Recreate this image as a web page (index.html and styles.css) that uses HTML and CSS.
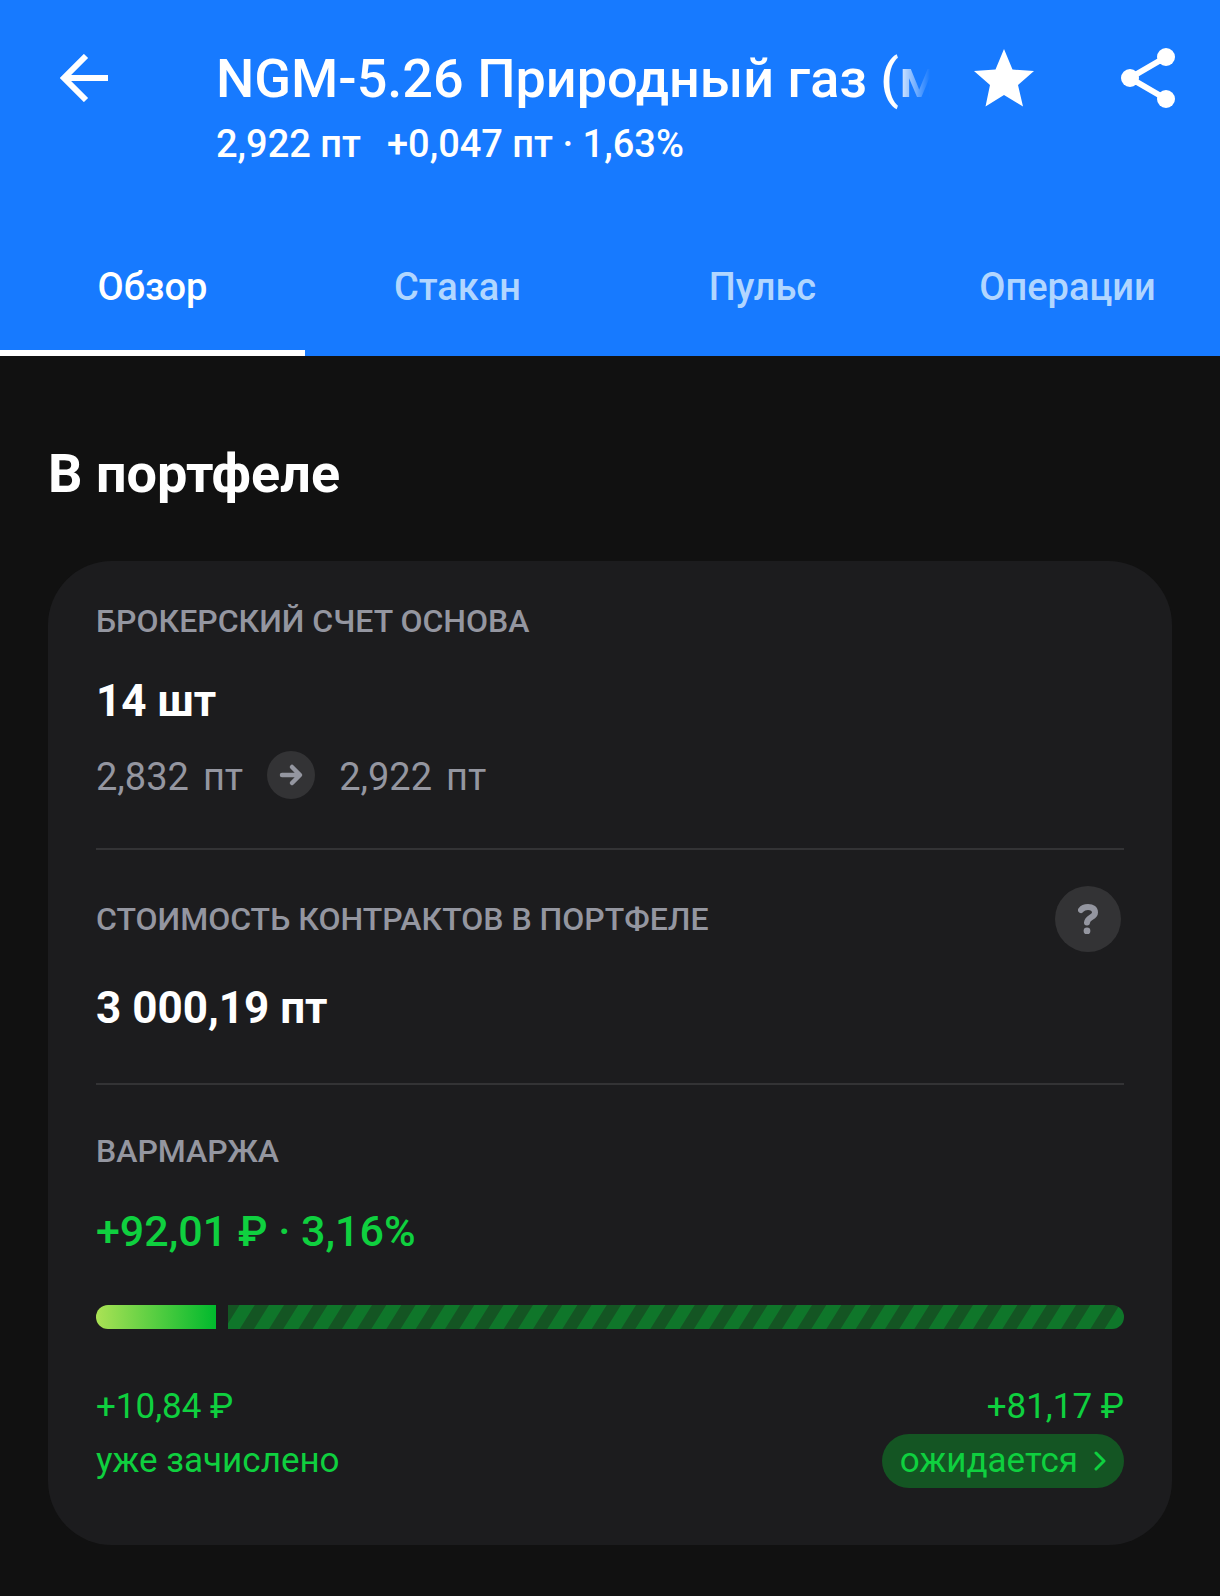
FILE: index.html
```html
<!DOCTYPE html>
<html lang="ru">
<head>
    <meta charset="UTF-8">
    <meta name="viewport" content="width=device-width, initial-scale=1.0">
    <title>NGM-5.26 Природный газ</title>
    <link rel="stylesheet" href="styles.css">
</head>
<body>
    <header class="header">
        <div class="toolbar">
            <button class="icon-button back" aria-label="Назад">
                <svg width="48" height="48" viewBox="0 0 48 48" fill="none" stroke="#fff" stroke-width="6">
                    <path d="M48 24H5M26 2L4 24l22 22"/>
                </svg>
            </button>
            <div class="instrument">
                <h1>NGM-5.26 Природный газ (мини)</h1>
                <p class="quote"><span>2,922 пт</span><span>+0,047 пт · 1,63%</span></p>
            </div>
            <button class="icon-button" aria-label="В избранное">
                <svg width="60" height="58" viewBox="0 0 60 58" fill="#fff">
                    <path d="M30 0l8.500 20.500L60 22 44 36l5 21.500L30 46 11.500 57.500 16 36 0 22l21.500-1.500z"/>
                </svg>
            </button>
            <button class="icon-button share" aria-label="Поделиться">
                <svg width="54" height="60" viewBox="0 0 54 60" fill="#fff">
                    <path d="M45 9L9 30l36 21" fill="none" stroke="#fff" stroke-width="6"/>
                    <circle cx="45" cy="9" r="9"/>
                    <circle cx="9" cy="30" r="9"/>
                    <circle cx="45" cy="51" r="9"/>
                </svg>
            </button>
        </div>
        <nav class="tabs">
            <a class="tab active" href="#overview">Обзор</a>
            <a class="tab" href="#book">Стакан</a>
            <a class="tab" href="#pulse">Пульс</a>
            <a class="tab" href="#operations">Операции</a>
        </nav>
    </header>

    <main class="content" id="overview">
        <h2>В портфеле</h2>
        <div class="card">
            <section class="block">
                <h3>БРОКЕРСКИЙ СЧЕТ ОСНОВА</h3>
                <p class="value">14 шт</p>
                <div class="prices">
                    <span class="price"><span>2,832</span> <span>пт</span></span>
                    <svg width="48" height="48" viewBox="0 0 48 48" fill="none">
                        <circle cx="24" cy="24" r="24" fill="#333335"/>
                        <path d="M15 24h17M25 16l8 8-8 8" stroke="#9496a0" stroke-width="4.500" stroke-linecap="round" stroke-linejoin="round"/>
                    </svg>
                    <span class="price"><span>2,922</span> <span>пт</span></span>
                </div>
            </section>

            <section class="block">
                <div class="block-head">
                    <h3>СТОИМОСТЬ КОНТРАКТОВ В ПОРТФЕЛЕ</h3>
                    <button class="help" aria-label="Подсказка">
                        <svg width="20" height="30" viewBox="0 0 20 30" fill="none">
                            <path d="M3 6C4.500 4 7 3 10 3c4.500 0 7 2 7 5.500C17 13.500 9.500 13 9 18.500" stroke="#9496a0" stroke-width="6" stroke-linecap="round"/>
                            <circle cx="9" cy="27" r="3.400" fill="#9496a0"/>
                        </svg>
                    </button>
                </div>
                <p class="value">3 000,19 пт</p>
            </section>

            <section class="block">
                <h3>ВАРМАРЖА</h3>
                <p class="value profit">+92,01 ₽ · 3,16%</p>
                <div class="progress">
                    <div class="done"></div>
                    <svg class="pending" width="100%" height="24">
                        <defs>
                            <pattern id="stripes" width="88" height="24" patternUnits="userSpaceOnUse">
                                <rect width="88" height="24" fill="#0f762a"/>
                                <path d="M26.700 0H41L26 24H11.700zM56 0h14.300l-15 24H41zM85.300 0h14.300l-15 24H70.300zM-2.700 0h14.300l-15 24h-14.300z" fill="#145523"/>
                            </pattern>
                        </defs>
                        <rect width="100%" height="24" fill="url(#stripes)"/>
                    </svg>
                </div>
                <div class="margin">
                    <div class="margin-part">
                        <span>+10,84 ₽</span>
                        <span>уже зачислено</span>
                    </div>
                    <div class="margin-part right">
                        <span>+81,17 ₽</span>
                        <button class="pill">ожидается
                            <svg width="12" height="20" viewBox="0 0 12 20" fill="none" stroke="#0fd03f" stroke-width="3" stroke-linecap="round" stroke-linejoin="round">
                                <path d="M2 2l8 8-8 8"/>
                            </svg>
                        </button>
                    </div>
                </div>
            </section>
        </div>
    </main>
</body>
</html>
```
FILE: styles.css
```css
* {
    box-sizing: border-box;
}
body {
    margin: 0;
    background-color: #111111;
    color: #fff;
    font-family: Roboto, sans-serif;
}
h1, h2, h3, p {
    margin: 0;
}
button {
    border: none;
    padding: 0;
    background: none;
    color: inherit;
    font: inherit;
    cursor: pointer;
}
svg {
    display: block;
    flex: none;
}
.header {
    background-color: #177aff;
}
.toolbar {
    display: flex;
    align-items: flex-start;
    padding: 48px 45px 0 60px;
}
.icon-button {
    display: flex;
    align-items: center;
    height: 60px;
}
.back {
    margin-right: 108px;
}
.share {
    margin-left: 87px;
}
.instrument {
    flex: 1;
    min-width: 0;
    margin-right: 44px;
}
h1 {
    font-size: 54px;
    line-height: 62px;
    font-weight: 500;
    white-space: nowrap;
    overflow: hidden;
    mask-image: linear-gradient(to left, transparent, #000 36px);
}
.quote {
    display: flex;
    gap: 26px;
    font-size: 38px;
    line-height: 68px;
    font-weight: 500;
}
.tabs {
    display: grid;
    grid-template-columns: repeat(4, 1fr);
    margin-top: 42px;
}
.tab {
    height: 136px;
    line-height: 134px;
    border-bottom: 6px solid transparent;
    color: #b1d6ff;
    font-size: 38px;
    font-weight: 500;
    text-align: center;
    text-decoration: none;
}
.tab.active {
    color: #fff;
    border-bottom-color: #fff;
}
.content {
    padding: 85px 48px 48px;
}
h2 {
    font-size: 54px;
    line-height: 66px;
    font-weight: 700;
}
.card {
    margin-top: 54px;
    padding: 0 48px 57px;
    border-radius: 64px;
    background-color: #1c1c1e;
}
.block {
    padding: 36px 0 45px;
}
.block + .block {
    border-top: 2px solid #333335;
}
.block:last-child {
    padding: 42px 0 0;
}
h3 {
    color: #9496a0;
    font-size: 32px;
    line-height: 48px;
    font-weight: 500;
}
.block-head {
    display: flex;
    justify-content: space-between;
    align-items: center;
    padding-right: 3px;
}
.help {
    display: flex;
    align-items: center;
    justify-content: center;
    width: 66px;
    height: 66px;
    border-radius: 50%;
    background-color: #333335;
}
.value {
    margin-top: 26px;
    font-size: 44px;
    line-height: 60px;
    font-weight: 700;
}
.profit {
    color: #0fd03f;
    font-size: 43px;
    font-weight: 500;
}
.prices {
    display: flex;
    align-items: flex-start;
    gap: 24px;
    margin-top: 20px;
    color: #9496a0;
    font-size: 38px;
    line-height: 52px;
}
.price {
    display: flex;
    gap: 14px;
}
.progress {
    display: flex;
    gap: 12px;
    margin-top: 44px;
    border-radius: 12px;
    overflow: hidden;
}
.done {
    width: 120px;
    height: 24px;
    flex: none;
    background: linear-gradient(to right, #abe255, #00b92d);
}
.pending {
    flex: 1;
    min-width: 0;
}
.margin {
    display: flex;
    justify-content: space-between;
    margin-top: 51px;
    color: #0fd03f;
    font-size: 35px;
    line-height: 54px;
}
.margin-part {
    display: flex;
    flex-direction: column;
}
.right {
    align-items: flex-end;
}
.pill {
    display: flex;
    align-items: center;
    gap: 16px;
    height: 54px;
    padding: 0 18px;
    border-radius: 27px;
    background-color: #145523;
}
```
